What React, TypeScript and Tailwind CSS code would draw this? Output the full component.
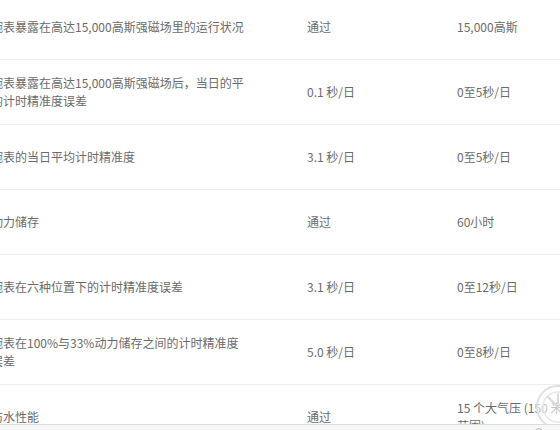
import React from "react";

const rows: { name: string; result: string; standard: string }[] = [
  { name: "腕表暴露在高达15,000高斯强磁场里的运行状况", result: "通过", standard: "15,000高斯" },
  { name: "腕表暴露在高达15,000高斯强磁场后，当日的平均计时精准度误差", result: "0.1 秒/日", standard: "0至5秒/日" },
  { name: "腕表的当日平均计时精准度", result: "3.1 秒/日", standard: "0至5秒/日" },
  { name: "动力储存", result: "通过", standard: "60小时" },
  { name: "腕表在六种位置下的计时精准度误差", result: "3.1 秒/日", standard: "0至12秒/日" },
  { name: "腕表在100%与33%动力储存之间的计时精准度误差", result: "5.0 秒/日", standard: "0至8秒/日" },
  { name: "防水性能", result: "通过", standard: "15 个大气压 (150 米范围)" },
];

export default function App() {
  return (
    <div
      className="relative w-[560px] h-[430px] overflow-hidden bg-white text-[12px] leading-[18px] text-[#6b6b6b]"
      style={{ fontFamily: '"Microsoft YaHei", "Noto Sans CJK SC", sans-serif' }}
    >
      <div className="-mt-[5px] -ml-[9px] w-[640px]">
        {rows.map((r, i) => (
          <div key={i} className="flex items-center h-[65px] border-b border-[#eeeeee]">
            <div className="w-[316px] shrink-0 pr-[60px]">{r.name}</div>
            <div className="w-[150px] shrink-0">{r.result}</div>
            <div className="w-[112px] shrink-0">{r.standard}</div>
          </div>
        ))}
      </div>

      {/* watermark */}
      <svg className="absolute left-[535px] top-[384px]" width="46" height="46" viewBox="0 0 46 46">
        <circle cx="23" cy="23" r="21" fill="rgba(255,255,255,0.6)" stroke="#e0e0e0" strokeWidth="2" />
        <circle cx="23" cy="23" r="15" fill="none" stroke="#e8e8e8" strokeWidth="1.5" />
        <path d="M23 23 L13 13 M23 23 L23 10" stroke="#dadada" strokeWidth="2" strokeLinecap="round" />
      </svg>

      {/* bottom bar */}
      <div className="absolute left-0 right-0 top-[424px] h-[24px] border-t border-[#dcdcdc] bg-[#f7f7f7] flex items-start pt-[3px] text-[11px] leading-[14px] text-[#888]">
        <div className="ml-[405px] flex items-center gap-[4px]">
          <span className="w-[8px] h-[8px] border border-[#4caf50] inline-block" />
          <span>比较设</span>
        </div>
        <div className="ml-[10px] flex items-center gap-[4px]">
          <span className="w-[8px] h-[8px] border border-[#4caf50] inline-block" />
          <span>比较腕</span>
        </div>
        <div className="ml-[30px] w-[8px] h-[8px] border border-[#bbbbbb] rounded-full" />
      </div>
    </div>
  );
}
